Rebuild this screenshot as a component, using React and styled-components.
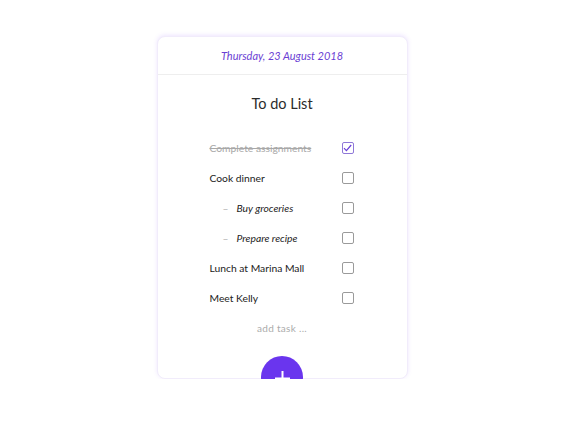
import styled, { createGlobalStyle } from "styled-components";

const GlobalStyle = createGlobalStyle`
  body {
    margin: 0;
    background: #ffffff;
    font-family: Lato, "Open Sans", sans-serif;
  }
`;

const tasks = [
  { id: 1, text: "Complete assignments", done: true },
  { id: 2, text: "Cook dinner" },
  { id: 3, text: "Buy groceries", sub: true },
  { id: 4, text: "Prepare recipe", sub: true },
  { id: 5, text: "Lunch at Marina Mall" },
  { id: 6, text: "Meet Kelly" },
];

export default function App() {
  return (
    <>
      <GlobalStyle />
      <Page>
        <Card>
          <Header>Thursday, 23 August 2018</Header>
          <Title>To do List</Title>
          <List>
            {tasks.map((t) => (
              <Row key={t.id}>
                <Label $sub={t.sub} $done={t.done}>
                  {t.sub && <Dash>–</Dash>}
                  {t.text}
                </Label>
                <Check $checked={t.done}>
                  {t.done && (
                    <svg width="9" height="8" viewBox="0 0 9 8">
                      <path d="M1 4.2 L3.4 6.6 L8.2 1" fill="none" stroke="#6a3fd8" strokeWidth="1.2" />
                    </svg>
                  )}
                </Check>
              </Row>
            ))}
          </List>
          <AddTask>add task ...</AddTask>
          <FabClip>
            <Fab>
              <svg width="15" height="15" viewBox="0 0 15 15">
                <path d="M7.5 0 V15 M0 7.5 H15" stroke="#ffffff" strokeWidth="2" />
              </svg>
            </Fab>
          </FabClip>
        </Card>
      </Page>
    </>
  );
}

const Page = styled.div`
  display: flex;
  justify-content: center;
  padding-top: 36px;
`;

const Card = styled.div`
  position: relative;
  width: 251px;
  box-sizing: border-box;
  border: 1px solid #f1ecfb;
  border-radius: 8px;
  box-shadow: 0 -1px 4px rgba(160, 110, 255, 0.18);
  padding-bottom: 35px;
  background: #fff;
`;

const Header = styled.div`
  height: 37px;
  display: flex;
  align-items: center;
  justify-content: center;
  border-bottom: 1px solid #eeeeee;
  color: #6b3fd4;
  font-style: italic;
  font-size: 11px;
`;

const Title = styled.div`
  margin-top: 19px;
  line-height: 20px;
  text-align: center;
  font-size: 14.5px;
  color: #2b2b2b;
`;

const List = styled.div`
  margin-top: 19px;
  padding: 0 52px;
  display: flex;
  flex-direction: column;
`;

const Row = styled.div`
  height: 30px;
  display: flex;
  align-items: center;
  justify-content: space-between;
`;

const Label = styled.span`
  display: flex;
  align-items: center;
  font-size: 10.3px;
  color: ${(p) => (p.$done ? "#a8a8a8" : "#222")};
  text-decoration: ${(p) => (p.$done ? "line-through" : "none")};
  font-style: ${(p) => (p.$sub ? "italic" : "normal")};
  padding-left: ${(p) => (p.$sub ? "13px" : "0")};
`;

const Dash = styled.span`
  color: #b0b0b0;
  font-style: normal;
  margin-right: 8px;
`;

const Check = styled.span`
  width: 10px;
  height: 10px;
  border: 1px solid ${(p) => (p.$checked ? "#8f78d8" : "#9a9a9a")};
  border-radius: 2px;
  display: flex;
  align-items: center;
  justify-content: center;
  margin-right: 1px;
`;

const AddTask = styled.div`
  height: 30px;
  line-height: 30px;
  text-align: center;
  font-size: 10px;
  color: #ababab;
  letter-spacing: 0.3px;
`;

const FabClip = styled.div`
  position: absolute;
  z-index: 2;
  left: 50%;
  bottom: -10px;
  transform: translateX(-50%);
  width: 42px;
  height: 32px;
  overflow: hidden;
  border-radius: 0 0 6px 6px;
`;

const Fab = styled.div`
  width: 42px;
  height: 42px;
  border-radius: 50%;
  background: #6a35ee;
  display: flex;
  align-items: center;
  justify-content: center;
  padding-top: 2px;
  box-sizing: border-box;
`;
